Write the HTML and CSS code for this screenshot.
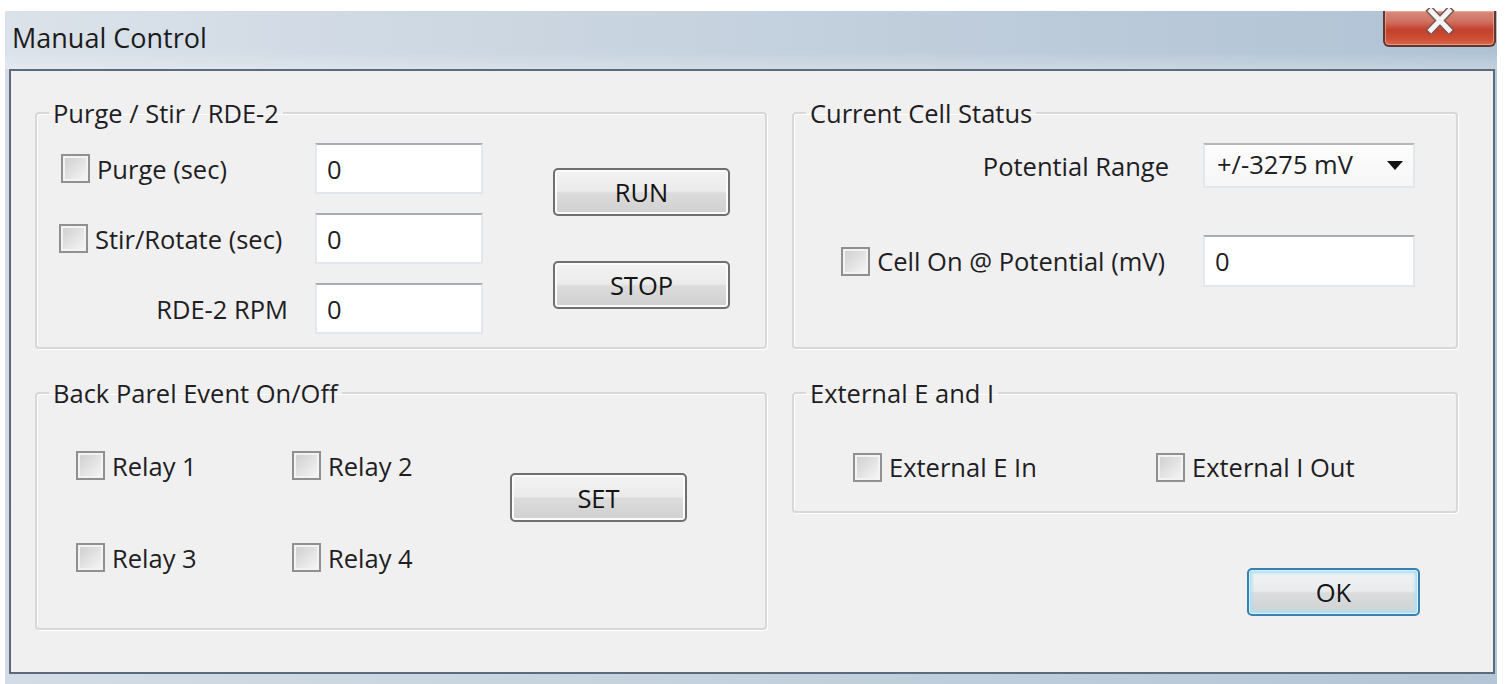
FILE: index.html
```html
<!DOCTYPE html>
<html>
<head>
<meta charset="utf-8">
<title>Manual Control</title>
<link rel="stylesheet" href="styles.css">
</head>
<body>
<div class="window">
  <div class="titlebar">
    <span class="title">Manual Control</span>
    <button class="close" aria-label="Close">
      <svg width="30" height="26" viewBox="0 0 30 26">
        <path d="M6 3 L24 22 M24 3 L6 22" stroke="#7a5550" stroke-width="8" stroke-linecap="square" fill="none"/>
        <path d="M6 3 L24 22 M24 3 L6 22" stroke="#f4f4f4" stroke-width="5" stroke-linecap="square" fill="none"/>
      </svg>
    </button>
  </div>
  <div class="client">
    <div class="layout">
      <fieldset class="group">
        <legend>Purge / Stir / RDE-2</legend>
        <div class="purge-body">
          <label class="chk r1"><span class="box"></span>Purge (sec)</label>
          <div class="edit r1">0</div>
          <div class="btncol">
            <button class="btn">RUN</button>
            <button class="btn">STOP</button>
          </div>
          <label class="chk r2 stir"><span class="box"></span>Stir/Rotate (sec)</label>
          <div class="edit r2">0</div>
          <span class="rlabel r3">RDE-2 RPM</span>
          <div class="edit r3">0</div>
        </div>
      </fieldset>

      <fieldset class="group">
        <legend>Current Cell Status</legend>
        <div class="cell-body">
          <span class="rlabel">Potential Range</span>
          <div class="combo"><span>+/-3275 mV</span>
            <svg class="arrow" width="16" height="9" viewBox="0 0 16 9"><path d="M0 0 H16 L8 9 Z" fill="#111"/></svg>
          </div>
          <label class="chk cellchk"><span class="box"></span>Cell On @ Potential (mV)</label>
          <div class="edit tall">0</div>
        </div>
      </fieldset>

      <fieldset class="group">
        <legend>Back Parel Event On/Off</legend>
        <div class="relay-body">
          <label class="chk"><span class="box"></span>Relay 1</label>
          <label class="chk"><span class="box"></span>Relay 2</label>
          <button class="btn setbtn">SET</button>
          <label class="chk"><span class="box"></span>Relay 3</label>
          <label class="chk"><span class="box"></span>Relay 4</label>
        </div>
      </fieldset>

      <div class="rightcol">
        <fieldset class="group ext">
          <legend>External E and I</legend>
          <div class="ext-body">
            <label class="chk"><span class="box"></span>External E In</label>
            <label class="chk"><span class="box"></span>External I Out</label>
          </div>
        </fieldset>
        <button class="btn okbtn">OK</button>
      </div>
    </div>
  </div>
</div>
</body>
</html>
```

FILE: styles.css
```css
html, body {
  margin: 0;
  padding: 0;
  background: #ffffff;
  overflow: hidden;
}

body {
  width: 1506px;
  height: 684px;
  font-family: "Open Sans", "Noto Sans", sans-serif;
  font-size: 25.5px;
  color: #1e1e24;
}

.window {
  margin: 11px 0 0 5px;
  width: 1492px;
  height: 680px;
  box-sizing: border-box;
  padding: 0 2px 0 4px;
  display: flex;
  flex-direction: column;
  background: linear-gradient(to right, #d3dce6 0%, #c6d3df 40%, #b3c5d6 100%);
}

.titlebar {
  height: 58px;
  flex: none;
  display: flex;
  align-items: flex-start;
  justify-content: space-between;
  background:
    linear-gradient(rgba(255, 255, 255, 0) 0%, rgba(255, 255, 255, 0) 70%, rgba(255, 255, 255, 0.25) 100%),
    linear-gradient(to right, #dbe2ea 0%, #cbd6e1 35%, #bccbda 70%, #afc2d4 100%);
  margin: 0 -2px 0 -4px;
}

.title {
  font-size: 27px;
  line-height: 30px;
  padding: 12px 0 0 7px;
  color: #1b1b1b;
}

.close {
  width: 113px;
  height: 36px;
  margin: 0 1px 0 0;
  padding: 0;
  border: 2px solid #5f3731;
  border-top: none;
  border-radius: 0 0 6px 6px;
  background: linear-gradient(#d98a7c 0%, #d07261 30%, #c4412d 55%, #cd4d33 80%, #d8684b 100%);
  box-shadow: inset 0 0 0 1px rgba(255, 200, 190, 0.5);
  display: flex;
  justify-content: center;
  align-items: flex-start;
}

.close svg {
  display: block;
  margin-top: -3px;
}

.client {
  flex: none;
  height: 605px;
  box-sizing: border-box;
  border: 2px solid #5b6b7c;
  background: #f0f0f0;
  padding: 28px 0 0 24px;
}

.layout {
  display: grid;
  grid-template-columns: 732px 666px;
  grid-template-rows: 250px 251px;
  column-gap: 25px;
  row-gap: 30px;
}

.group {
  margin: 0;
  padding: 0;
  min-width: 0;
  box-sizing: border-box;
  border: 2px solid #d8d8d8;
  border-radius: 4px;
  box-shadow: inset 1px 1px 0 #ffffff, 1px 1px 0 #ffffff;
}

.group legend {
  margin-left: 12px;
  padding: 0 4px;
  line-height: 28px;
  color: #1e1e24;
}

.chk {
  display: flex;
  align-items: center;
  gap: 7px;
  white-space: nowrap;
}

.box {
  flex: none;
  width: 29px;
  height: 29px;
  box-sizing: border-box;
  border: 2px solid #8f9090;
  background: linear-gradient(135deg, #cdcdcd 0%, #e4e4e4 55%, #f8f8f8 100%);
  box-shadow: inset 0 0 0 2px #f3f3f3;
}

.edit {
  box-sizing: border-box;
  background: #ffffff;
  border: 2px solid #e3e7ec;
  border-top-color: #a9acb2;
  padding-left: 10px;
  display: flex;
  align-items: center;
}

.rlabel {
  white-space: nowrap;
  justify-self: end;
  align-self: center;
}

.btn {
  box-sizing: border-box;
  width: 177px;
  height: 48px;
  padding: 0;
  border: 2px solid #707070;
  border-radius: 5px;
  background: linear-gradient(#f3f3f3 0%, #ebebeb 48%, #dcdcdc 52%, #cfcfcf 100%);
  box-shadow: inset 0 0 0 2px #fbfbfb;
  font-family: "Open Sans", "Noto Sans", sans-serif;
  font-size: 25.5px;
  color: #141414;
}

/* Purge / Stir / RDE-2 */
.purge-body {
  display: grid;
  grid-template-columns: 254px 168px 70px 177px;
  grid-template-rows: 51px 51px 51px;
  row-gap: 19px;
  padding: 16px 0 0 24px;
}

.purge-body .r1 { grid-row: 1; }
.purge-body .r2 { grid-row: 2; }
.purge-body .r3 { grid-row: 3; }
.purge-body .chk { grid-column: 1; }
.purge-body .edit { grid-column: 2; }
.purge-body .rlabel { grid-column: 1; margin-right: 27px; }
.purge-body .stir { margin-left: -2px; }

.btncol {
  grid-column: 4;
  grid-row: 1 / 4;
  display: flex;
  flex-direction: column;
  gap: 45px;
  padding-top: 25px;
}

/* Current Cell Status */
.cell-body {
  display: grid;
  grid-template-columns: auto 212px;
  grid-template-rows: 45px 52px;
  justify-content: end;
  column-gap: 34px;
  row-gap: 47px;
  padding: 16px 41px 0 0;
}

.cellchk {
  justify-self: end;
  margin-right: 4px;
}

.combo {
  box-sizing: border-box;
  border: 2px solid #e3e7ec;
  border-top-color: #b4b7bc;
  background: linear-gradient(#fdfdfd, #f6f6f6);
  display: flex;
  align-items: center;
  justify-content: space-between;
  padding: 0 10px 0 12px;
}

.combo span {
  margin-top: -4px;
}

.arrow {
  display: block;
}

/* Back Parel */
.relay-body {
  display: grid;
  grid-template-columns: 216px 218px 177px;
  grid-template-rows: 31px 31px;
  row-gap: 61px;
  padding: 43px 0 0 39px;
}

.setbtn {
  grid-column: 3;
  grid-row: 1 / 3;
  align-self: start;
  margin-top: 23px;
  height: 49px;
}

/* Right column row 2 */
.rightcol {
  display: flex;
  flex-direction: column;
}

.ext {
  height: 134px;
  flex: none;
}

.ext-body {
  display: grid;
  grid-template-columns: 303px auto;
  padding: 43px 0 0 59px;
}

.okbtn {
  align-self: flex-end;
  margin: 55px 38px 0 0;
  width: 173px;
  border-color: #3b7fae;
  background: linear-gradient(#f1f3f4 0%, #e9ebec 48%, #dadcdd 52%, #cfd2d4 100%);
  box-shadow: inset 0 0 0 1px #d6f2fd, inset 0 0 3px 3px #a8e0f8;
}
```
